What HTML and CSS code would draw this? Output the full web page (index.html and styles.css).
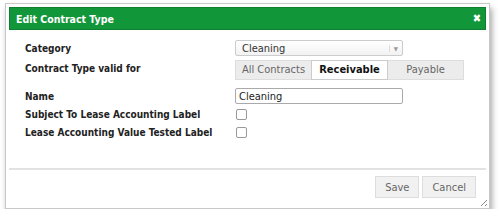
FILE: index.html
```html
<!DOCTYPE html>
<html lang="en">
<head>
    <meta charset="UTF-8">
    <title>Edit Contract Type</title>
    <link rel="stylesheet" href="styles.css">
</head>
<body>

<div class="dialog">
    <div class="dialog-title">
        <span>Edit Contract Type</span>
        <span class="close">&#10006;</span>
    </div>

    <div class="dialog-body">
        <div class="row row-category">
            <div class="label">Category</div>
            <div class="select">
                <span>Cleaning</span>
                <span class="arrow">&#9660;</span>
            </div>
        </div>
        <div class="row row-tabs">
            <div class="label">Contract Type valid for</div>
            <div class="tabs">
                <div class="tab">All Contracts</div>
                <div class="tab active">Receivable</div>
                <div class="tab">Payable</div>
            </div>
        </div>
        <div class="row row-name">
            <div class="label">Name</div>
            <input class="text" type="text" value="Cleaning">
        </div>
        <div class="row row-check">
            <div class="label">Subject To Lease Accounting Label</div>
            <span class="check"></span>
        </div>
        <div class="row row-check">
            <div class="label">Lease Accounting Value Tested Label</div>
            <span class="check"></span>
        </div>
    </div>

    <div class="dialog-footer">
        <button class="btn">Save</button>
        <button class="btn">Cancel</button>
    </div>
    <div class="grip"></div>
</div>

</body>
</html>
```

FILE: styles.css
```css
body {
    margin: 0;
    padding: 3px 0 0 5px;
    background-color: #fff;
    font-family: "DejaVu Sans Condensed", "DejaVu Sans", sans-serif;
    font-size: 11px;
    color: #222;
}
.dialog {
    position: relative;
    width: 477px;
    height: 198px;
    border: 1px solid #c8c8c8;
    padding: 3px;
    background-color: #fff;
    box-shadow: 2px 5px 6px rgba(0, 0, 0, 0.35);
}
.dialog-title {
    display: flex;
    justify-content: space-between;
    align-items: center;
    height: 21px;
    padding: 0 6px;
    background-color: #12963a;
    border: 1px solid #0e7f30;
    color: #fff;
    font-weight: bold;
    font-size: 10.5px;
}
.close {
    font-size: 11px;
    margin-right: -2px;
}
.dialog-body {
    padding: 10px 0 0 16px;
    height: 128px;
}
.row {
    display: flex;
    align-items: center;
}
.row-category {
    height: 16px;
    margin-bottom: 4px;
}
.row-tabs {
    height: 20px;
    margin-bottom: 8px;
}
.row-tabs .label {
    margin-top: -3px;
}
.row-name {
    height: 16px;
    margin-bottom: 5px;
}
.row-check {
    height: 11px;
    margin-bottom: 7px;
}
.label {
    width: 210px;
    font-weight: bold;
    font-size: 10px;
}
.select {
    display: flex;
    justify-content: space-between;
    align-items: center;
    width: 156px;
    height: 14px;
    padding: 0 4px 0 6px;
    border: 1px solid #ccc;
    border-radius: 2px;
    background: linear-gradient(#fff, #f2f2f2);
    color: #333;
}
.arrow {
    font-size: 6px;
    color: #999;
    border-left: 1px solid #ddd;
    padding-left: 4px;
}
.tabs {
    display: flex;
    background-color: #ececec;
    border: 1px solid #ddd;
}
.tab {
    width: 75px;
    height: 18px;
    line-height: 18px;
    text-align: center;
    color: #666;
}
.tab.active {
    background-color: #fff;
    border: 1px solid #ccc;
    margin: -1px 0;
    font-weight: bold;
    color: #111;
}
.text {
    width: 160px;
    height: 12px;
    margin: 0;
    padding: 1px 3px;
    border: 1px solid #aaa;
    border-radius: 2px;
    font-family: inherit;
    font-size: 11px;
    color: #222;
}
.check {
    width: 9px;
    height: 9px;
    margin-left: 1px;
    border: 1px solid #999;
    border-radius: 2px;
}
.dialog-footer {
    display: flex;
    justify-content: flex-end;
    gap: 3px;
    padding: 6px 10px 0 0;
    border-top: 2px solid #e2e2e2;
}
.btn {
    height: 22px;
    padding: 0 9px;
    border: 1px solid #ddd;
    background-color: #f1f1f1;
    font-family: inherit;
    font-size: 11px;
    color: #666;
}
.grip {
    position: absolute;
    right: 2px;
    bottom: 2px;
    width: 9px;
    height: 9px;
    background: repeating-linear-gradient(135deg, transparent 0 2px, #888 2px 3px);
    clip-path: polygon(100% 0, 100% 100%, 0 100%);
}
```
